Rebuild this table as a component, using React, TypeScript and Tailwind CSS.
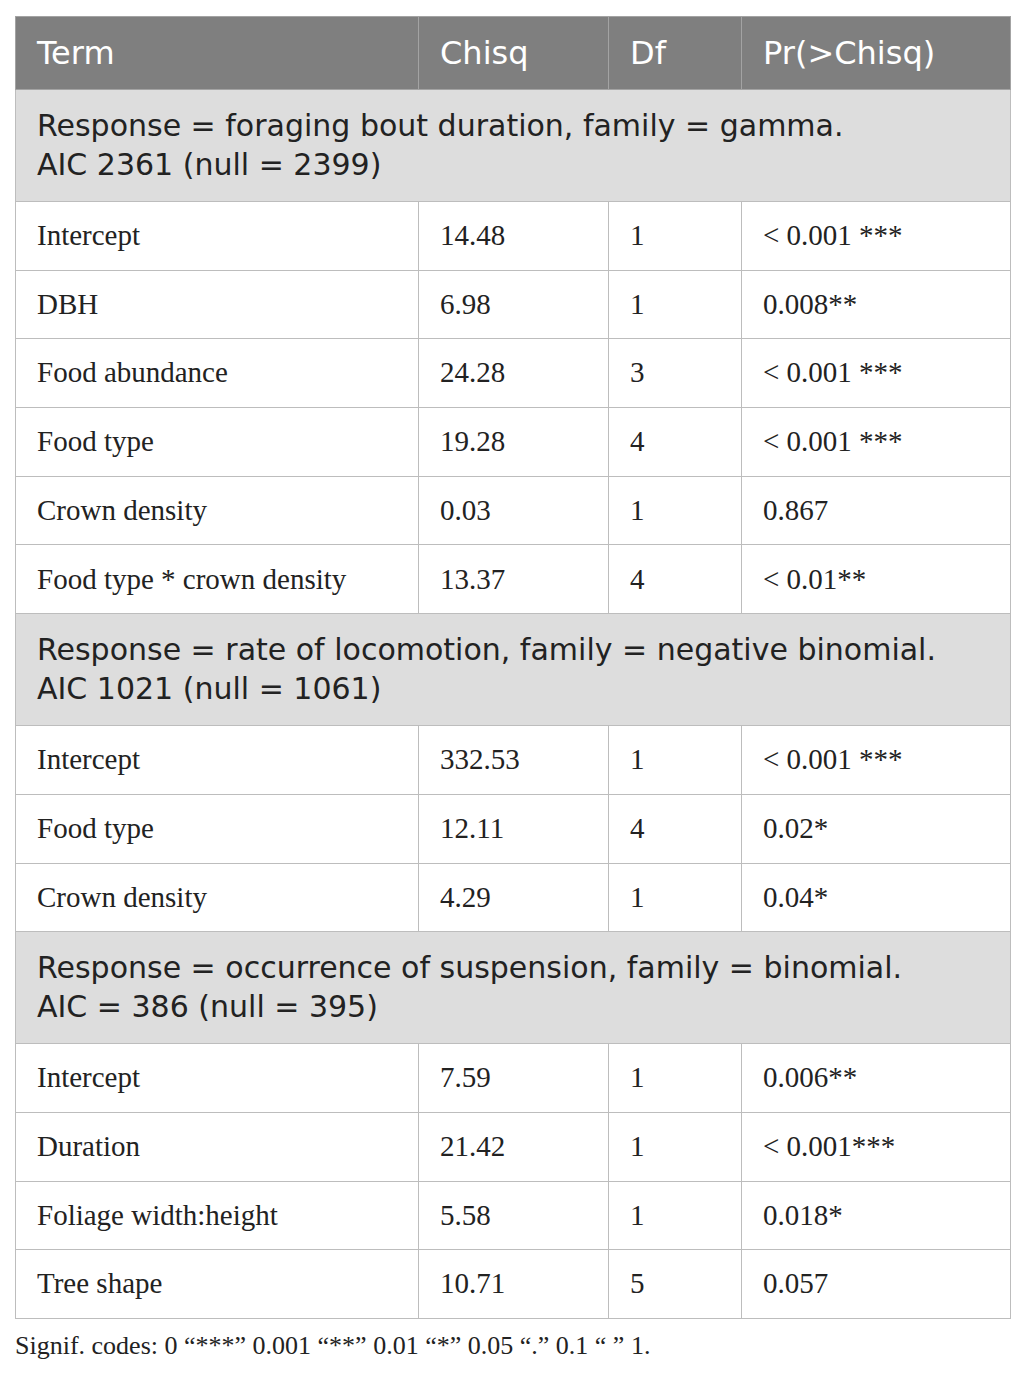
const sans = "font-['DejaVu_Sans',sans-serif]"
const serif = "font-['Liberation_Serif',serif]"

type Row = [string, string, string, string]

const sections: { title: string[]; rows: Row[] }[] = [
  {
    title: ['Response = foraging bout duration, family = gamma.', 'AIC 2361 (null = 2399)'],
    rows: [
      ['Intercept', '14.48', '1', '< 0.001 ***'],
      ['DBH', '6.98', '1', '0.008**'],
      ['Food abundance', '24.28', '3', '< 0.001 ***'],
      ['Food type', '19.28', '4', '< 0.001 ***'],
      ['Crown density', '0.03', '1', '0.867'],
      ['Food type * crown density', '13.37', '4', '< 0.01**'],
    ],
  },
  {
    title: ['Response = rate of locomotion, family = negative binomial.', 'AIC 1021 (null = 1061)'],
    rows: [
      ['Intercept', '332.53', '1', '< 0.001 ***'],
      ['Food type', '12.11', '4', '0.02*'],
      ['Crown density', '4.29', '1', '0.04*'],
    ],
  },
  {
    title: ['Response = occurrence of suspension, family = binomial.', 'AIC = 386 (null = 395)'],
    rows: [
      ['Intercept', '7.59', '1', '0.006**'],
      ['Duration', '21.42', '1', '< 0.001***'],
      ['Foliage width:height', '5.58', '1', '0.018*'],
      ['Tree shape', '10.71', '5', '0.057'],
    ],
  },
]

export default function App() {
  return (
    <div className="min-h-[1376px] w-[1026px] bg-white pt-4 pl-[15px]">
      <table className="w-[995px] table-fixed border-collapse">
        <colgroup>
          <col className="w-[403px]" />
          <col className="w-[190px]" />
          <col className="w-[133px]" />
          <col className="w-[269px]" />
        </colgroup>
        <thead>
          <tr className={`h-[73px] bg-[#7f7f7f] text-left text-[32px] font-normal text-white ${sans}`}>
            {['Term', 'Chisq', 'Df', 'Pr(>Chisq)'].map((h) => (
              <th key={h} className="border border-[#a3a3a3] px-[21px] font-normal">
                {h}
              </th>
            ))}
          </tr>
        </thead>
        <tbody>
          {sections.map((s) => (
            <Section key={s.title[0]} title={s.title} rows={s.rows} />
          ))}
        </tbody>
      </table>
      <p className={`mt-[7px] text-[26px] text-[#222] ${serif}`}>
        Signif. codes: 0 “***” 0.001 “**” 0.01 “*” 0.05 “.” 0.1 “ ” 1.
      </p>
    </div>
  )
}

function Section({ title, rows }: { title: string[]; rows: Row[] }) {
  return (
    <>
      <tr className="h-[112px] bg-[#dddddd]">
        <td colSpan={4} className={`border border-[#bdbdbd] px-[21px] pb-[2px] text-[30px] leading-[39px] text-[#222] ${sans}`}>
          {title[0]}
          <br />
          {title[1]}
        </td>
      </tr>
      {rows.map((r) => (
        <tr key={r[0]} className={`h-[68.7px] text-[29px] text-[#222] ${serif}`}>
          {r.map((c, i) => (
            <td key={i} className="border border-[#bdbdbd] px-[21px]">
              {c}
            </td>
          ))}
        </tr>
      ))}
    </>
  )
}
